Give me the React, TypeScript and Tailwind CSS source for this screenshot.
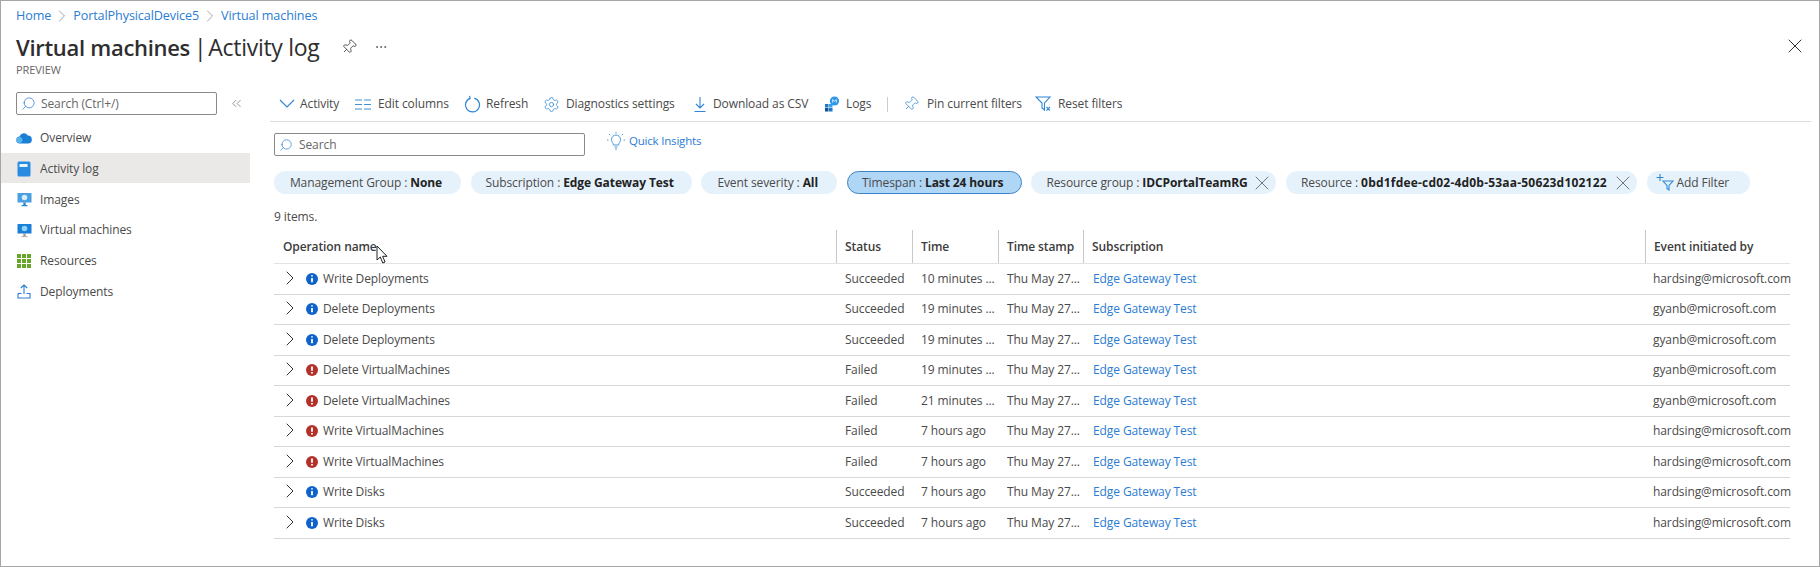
import { ChevronRight, ChevronsLeft, Pin, Search, Settings, X, MoreHorizontal } from 'lucide-react'

const rows = [
  { name: 'Write Deployments', ok: true, status: 'Succeeded', time: '10 minutes ...', by: 'hardsing@microsoft.com' },
  { name: 'Delete Deployments', ok: true, status: 'Succeeded', time: '19 minutes ...', by: 'gyanb@microsoft.com' },
  { name: 'Delete Deployments', ok: true, status: 'Succeeded', time: '19 minutes ...', by: 'gyanb@microsoft.com' },
  { name: 'Delete VirtualMachines', ok: false, status: 'Failed', time: '19 minutes ...', by: 'gyanb@microsoft.com' },
  { name: 'Delete VirtualMachines', ok: false, status: 'Failed', time: '21 minutes ...', by: 'gyanb@microsoft.com' },
  { name: 'Write VirtualMachines', ok: false, status: 'Failed', time: '7 hours ago', by: 'hardsing@microsoft.com' },
  { name: 'Write VirtualMachines', ok: false, status: 'Failed', time: '7 hours ago', by: 'hardsing@microsoft.com' },
  { name: 'Write Disks', ok: true, status: 'Succeeded', time: '7 hours ago', by: 'hardsing@microsoft.com' },
  { name: 'Write Disks', ok: true, status: 'Succeeded', time: '7 hours ago', by: 'hardsing@microsoft.com' },
]

function CloudIcon() {
  return (
    <svg width="16" height="12" viewBox="0 0 16 12">
      <path d="M4 11.5a3.5 3.5 0 0 1-.4-7A4.5 4.5 0 0 1 11.8 3.6 3.9 3.9 0 0 1 12 11.5z" fill="#1b7fd6" />
      <circle cx="3.4" cy="8" r="3" fill="#59b4ea" />
    </svg>
  )
}

function BookIcon() {
  return (
    <svg width="14" height="16" viewBox="0 0 14 16">
      <rect x="0.5" y="0.5" width="13" height="15" rx="1.5" fill="#2a8ce0" />
      <rect x="2.5" y="3" width="8" height="3" fill="#e8f3fc" />
    </svg>
  )
}

function MonitorIcon({ light }: { light?: boolean }) {
  return (
    <svg width="15" height="15" viewBox="0 0 15 15">
      <rect x="0.5" y="1" width="14" height="9.5" rx="0.5" fill={light ? '#4a9fe0' : '#1a7fd8'} />
      <circle cx="7.5" cy="5.5" r="2.8" fill={light ? '#d5ecfb' : '#8fd3f7'} />
      <rect x="6.3" y="10.5" width="2.4" height="3" fill={light ? '#2a86cc' : '#9a9a9a'} />
      <rect x="4.5" y="13" width="6" height="1.2" fill={light ? '#2a86cc' : '#b5b5b5'} />
    </svg>
  )
}

function GridIcon() {
  return (
    <svg width="14" height="14" viewBox="0 0 14 14" fill="#69a52a">
      {[0, 5, 10].flatMap(y =>
        [0, 5, 10].map(x => <rect key={`${x}-${y}`} x={x} y={y} width="4" height="4" />)
      )}
    </svg>
  )
}

function UploadIcon() {
  return (
    <svg width="14" height="15" viewBox="0 0 14 15" fill="none" stroke="#2b7cd3" strokeWidth="1.1">
      <path d="M7 10V1M3.8 4 7 1l3.2 3" />
      <path d="M1 9.5v4.5h12V9.5H9.5" />
      <path d="M1 9.5h3.5" />
    </svg>
  )
}

function ChevronIcon() {
  return (
    <svg width="16" height="10" viewBox="0 0 16 10" fill="none" stroke="#2f86d4" strokeWidth="1.2">
      <path d="m1 1 7 7 7-7" />
    </svg>
  )
}

function ColumnsIcon() {
  return (
    <svg width="16" height="11" viewBox="0 0 16 11" fill="none" stroke="#3f8fd6" strokeWidth="1.1">
      <path d="M0 1h7M9 1h7M0 5.5h7M9 5.5h7M0 10h7M9 10h7" />
    </svg>
  )
}

function RefreshIcon() {
  return (
    <svg width="17" height="18" viewBox="0 0 17 18" fill="none" stroke="#2f86d4" strokeWidth="1.2">
      <path d="M10.300 3.200a7 7 0 1 1-4.200.2L5.600 .8" />
    </svg>
  )
}

function DownloadIcon() {
  return (
    <svg width="14" height="17" viewBox="0 0 14 17" fill="none" stroke="#2f86d4" strokeWidth="1.1">
      <path d="M7 1v11M3 8l4 4 4-4M1.500 15.500h11" />
    </svg>
  )
}

function LogsIcon() {
  return (
    <svg width="16" height="16" viewBox="0 0 16 16">
      <rect x="1" y="8" width="3.5" height="3.5" fill="#1f78c8" />
      <rect x="5" y="8" width="3.5" height="3.5" fill="#3aa0e8" />
      <rect x="1" y="12" width="3.5" height="3.5" fill="#12508f" />
      <rect x="5" y="12" width="3.5" height="3.5" fill="#1f78c8" />
      <circle cx="10.5" cy="5" r="4.6" fill="#2f97e8" />
      <path d="M8.7 6.6V3.6l1.8 1.6 1.8-1.6v3" stroke="#fff" strokeWidth="0.8" fill="none" />
    </svg>
  )
}

function FunnelXIcon() {
  return (
    <svg width="17" height="16" viewBox="0 0 17 16" fill="none" stroke="#2f86d4" strokeWidth="1.1">
      <path d="M1 1h14L9.5 7v7L7 12V7z" />
      <path d="m11.5 11 3.4 3.6M14.9 11l-3.4 3.6" />
    </svg>
  )
}

function AddFilterIcon() {
  return (
    <svg width="18" height="17" viewBox="0 0 18 17" fill="none" stroke="#2f86d4" strokeWidth="1.1">
      <path d="M4 0v7M0.5 3.5h7" />
      <path d="M7 7h10l-4 4.5V16l-2-1.2v-3.3z" />
    </svg>
  )
}

function BulbIcon() {
  return (
    <svg width="18" height="18" viewBox="0 0 18 18" fill="none" stroke="#4a9ad8" strokeWidth="1">
      <path d="M6.5 13c0-2-2-2.5-2-5.5a4.5 4.5 0 0 1 9 0c0 3-2 3.500-2 5.500z" />
      <path d="M7.5 15h3M8 17h2" />
      <path d="M9 0v1.500M2 2l1.200 1.200M16 2l-1.200 1.200M0 8h1.500M16.500 8H18" />
    </svg>
  )
}

function StatusIcon({ ok }: { ok: boolean }) {
  return (
    <svg width="12" height="12" viewBox="0 0 12 12">
      <circle cx="6" cy="6" r="6" fill={ok ? '#0f62c9' : '#b3312b'} />
      {ok ? (
        <path d="M6 2.200v1.400M6 5v4.300" stroke="#fff" strokeWidth="1.800" />
      ) : (
        <path d="M6 2.500v4.200M6 8v1.500" stroke="#fff" strokeWidth="1.800" />
      )}
    </svg>
  )
}

function Cursor() {
  return (
    <svg className="absolute left-[375px] top-[244px]" width="13" height="19" viewBox="0 0 13 19">
      <path d="M1 1v14l3.300-3 2.500 6 2.300-1-2.500-5.700H11z" fill="#fff" stroke="#222" strokeWidth="1" />
    </svg>
  )
}

const nav = [
  { label: 'Overview', icon: <CloudIcon /> },
  { label: 'Activity log', icon: <BookIcon />, active: true },
  { label: 'Images', icon: <MonitorIcon light /> },
  { label: 'Virtual machines', icon: <MonitorIcon /> },
  { label: 'Resources', icon: <GridIcon /> },
  { label: 'Deployments', icon: <UploadIcon /> },
]

const toolbar = [
  { label: 'Activity', icon: <ChevronIcon />, cls: 'w-[76px] gap-[4px]' },
  { label: 'Edit columns', icon: <ColumnsIcon />, cls: 'w-[109px] gap-[6px]' },
  { label: 'Refresh', icon: <RefreshIcon />, cls: 'w-[79px] gap-[5px]' },
  { label: 'Diagnostics settings', icon: <Settings size={17} strokeWidth={1.1} className="text-[#2f86d4]" />, cls: 'w-[149px] gap-[6px]' },
  { label: 'Download as CSV', icon: <DownloadIcon />, cls: 'w-[133px] gap-[4px]' },
]

function Pill({ label, value, w, x, active, wide }: { label: string; value: string; w: string; x?: boolean; active?: boolean; wide?: boolean }) {
  return (
    <div
      className={`${w} h-[23px] shrink-0 rounded-full flex items-center whitespace-nowrap ${
        x ? 'justify-between pl-[15px] pr-[2px]' : 'justify-center pr-[3px]'
      } ${active ? 'bg-[#b0d6f5] border border-[#3a86c8]' : 'bg-[#e6f2fb]'}`}
    >
      <span>
        {label} : <b className={`font-bold text-[#222] ${wide ? 'tracking-[0.2px]' : ''}`}>{value}</b>
      </span>
      {x && <X size={24} strokeWidth={0.8} className="-my-1 text-[#555]" />}
    </div>
  )
}

const gridCols = 'grid grid-cols-[562px_76px_86px_85px_562px_145px]'

export default function App() {
  return (
    <div className="relative w-[1820px] h-[567px] bg-white border border-[#a6a6a6] text-[#4a4a4a] text-[12px] overflow-hidden font-['Open_Sans','Noto_Sans',sans-serif] tracking-[-0.1px]">
      {/* Header */}
      <div className="pl-[15px] pt-[7px] h-[84px]">
        <div className="flex items-center gap-[4px] text-[#2b7cd3] text-[12.600px] h-4">
          <span>Home</span>
          <ChevronRight size={20} strokeWidth={0.8} className="-mx-[3px] text-[#777]" />
          <span>PortalPhysicalDevice5</span>
          <ChevronRight size={20} strokeWidth={0.8} className="-mx-[3px] text-[#777]" />
          <span>Virtual machines</span>
        </div>
        <div className="flex items-center h-8 mt-[7px]">
          <span className="text-[22px] text-[#2e2e2e] tracking-[-0.3px] font-semibold">Virtual machines</span>
          <span className="text-[23px] text-[#2e2e2e] tracking-[-0.3px] ml-[4px]">|</span>
          <span className="text-[23px] text-[#2e2e2e] tracking-[-0.3px] ml-[2px]">Activity log</span>
          <Pin size={16} strokeWidth={1.2} className="ml-[22px] rotate-45 text-[#333]" />
          <MoreHorizontal size={14} strokeWidth={1.2} className="ml-[17px] text-[#444]" />
        </div>
        <div className="text-[11px] text-[#666] leading-4 -mt-px">PREVIEW</div>
      </div>
      <X size={24} strokeWidth={1} className="absolute right-[12px] top-[33px] text-[#333]" />

      <div className="flex">
        {/* Sidebar */}
        <div className="w-[249px] shrink-0">
          <div className="flex items-center pl-[15px] pt-[7px]">
            <div className="w-[201px] h-[23px] border border-[#8a8a8a] rounded-[2px] flex items-center gap-[5px] pl-[4px] text-[#666]">
              <Search size={15} strokeWidth={1.2} className="text-[#2b7cd3] -scale-x-100" />
              Search (Ctrl+/)
            </div>
            <ChevronsLeft size={15} strokeWidth={1} className="ml-[12px] text-[#555]" />
          </div>
          <div className="mt-[7px]">
            {nav.map(n => (
              <div key={n.label} className={`h-[30.700px] pt-[2px] flex items-center gap-[8px] pl-[15px] ${n.active ? 'bg-[#ebe9e8]' : ''}`}>
                <span className="w-[16px] flex justify-center">{n.icon}</span>
                {n.label}
              </div>
            ))}
          </div>
        </div>

        {/* Main */}
        <div className="flex-1 pl-5">
          <div className="h-[37px] w-[1541px] pt-[2px] border-b border-[#dcdcdc] flex items-center text-[#4a4a4a]">
            {toolbar.map(t => (
              <div key={t.label} className={`${t.cls} shrink-0 flex items-center whitespace-nowrap pl-[8px]`}>
                <span className="w-[18px] flex justify-center">{t.icon}</span>
                {t.label}
              </div>
            ))}
            <div className="flex items-center gap-[6px] pl-[8px] w-[71px] shrink-0">
              <LogsIcon />
              Logs
            </div>
            <div className="w-px h-[15px] bg-[#ccc] mr-[15px]" />
            <div className="flex items-center gap-[8px] w-[132px] shrink-0 whitespace-nowrap">
              <Pin size={16} strokeWidth={1.1} className="rotate-45 text-[#2f86d4]" />
              Pin current filters
            </div>
            <div className="flex items-center gap-[6px] whitespace-nowrap">
              <FunnelXIcon />
              Reset filters
            </div>
          </div>

          <div className="pl-1">
            <div className="flex items-center mt-[11px]">
              <div className="w-[311px] h-[23px] border border-[#8a8a8a] rounded-[2px] flex items-center gap-[6px] pl-[4px] text-[#666]">
                <Search size={14} strokeWidth={1.2} className="text-[#2b7cd3] -scale-x-100" />
                Search
              </div>
              <div className="flex items-center gap-1 ml-[22px] -mt-[8px] text-[#2b7cd3] text-[11.500px] tracking-[-0.2px]">
                <BulbIcon />
                Quick Insights
              </div>
            </div>

            <div className="flex items-center gap-[9.600px] mt-[15px]">
              <Pill label="Management Group" value="None" w="w-[187px]" />
              <Pill label="Subscription" value="Edge Gateway Test" w="w-[221px]" />
              <Pill label="Event severity" value="All" w="w-[136px]" />
              <Pill label="Timespan" value="Last 24 hours" w="w-[175px]" active />
              <Pill label="Resource group" value="IDCPortalTeamRG" w="w-[245px]" x />
              <Pill label="Resource" value="0bd1fdee-cd02-4d0b-53aa-50623d102122" w="w-[351px]" x wide />
              <div className="w-[103px] h-[23px] rounded-full bg-[#e6f2fb] flex items-center pl-[9px] gap-[3px]">
                <AddFilterIcon />
                Add Filter
              </div>
            </div>

            <div className="mt-[15px] h-4 leading-4">9 items.</div>

            <div className="w-[1516px] mt-[2px]">
              <div className={`${gridCols} h-[37px] border-b border-[#e3e3e3] font-semibold text-[#3c3c3c] pt-[3px]`}>
                {['Operation name', 'Status', 'Time', 'Time stamp', 'Subscription', 'Event initiated by'].map((h, i) => (
                  <div key={h} className={`flex items-center h-[33px] whitespace-nowrap ${i > 0 ? 'border-l border-[#c8c8c8] pl-[8px]' : 'pl-[9px]'}`}>
                    {h}
                  </div>
                ))}
              </div>
              {rows.map((r, i) => (
                <div key={i} className={`${gridCols} h-[30.500px] items-center border-b border-[#d8d8d8]`}>
                  <div className="flex items-center pl-[8px] whitespace-nowrap">
                    <ChevronRight size={24} strokeWidth={1} className="text-[#333] -mx-[4px] -my-[4px] -mt-[6px]" />
                    <span className="ml-[8px]"><StatusIcon ok={r.ok} /></span>
                    <span className="ml-[5px]">{r.name}</span>
                  </div>
                  <div className="pl-[9px]">{r.status}</div>
                  <div className="pl-[9px] whitespace-nowrap">{r.time}</div>
                  <div className="pl-[9px] whitespace-nowrap">Thu May 27...</div>
                  <div className="pl-[10px] text-[#2b7cd3]">Edge Gateway Test</div>
                  <div className="pl-[8px] whitespace-nowrap">{r.by}</div>
                </div>
              ))}
            </div>
          </div>
        </div>
      </div>
      <Cursor />
    </div>
  )
}
